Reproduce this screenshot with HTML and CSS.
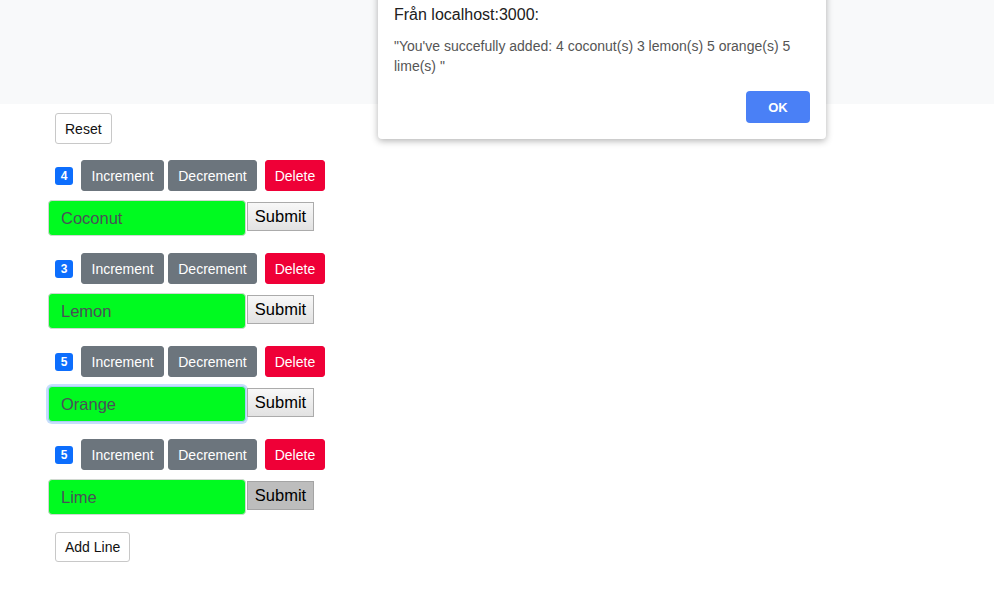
FILE: index.html
```html
<!DOCTYPE html>
<html>
<head>
<meta charset="utf-8">
<link rel="stylesheet" href="styles.css">
</head>
<body>
<div class="topbar"></div>
<div class="page">
  <button class="btn-plain reset">Reset</button>
  <div class="line">
    <div class="controls"><span class="badge">4</span><button class="btn-sm gray inc">Increment</button><button class="btn-sm gray dec">Decrement</button><button class="btn-sm red">Delete</button></div>
    <form class="entry"><input class="field" value="Coconut"><button type="button" class="submit">Submit</button></form>
  </div>
  <div class="line">
    <div class="controls"><span class="badge">3</span><button class="btn-sm gray inc">Increment</button><button class="btn-sm gray dec">Decrement</button><button class="btn-sm red">Delete</button></div>
    <form class="entry"><input class="field" value="Lemon"><button type="button" class="submit">Submit</button></form>
  </div>
  <div class="line">
    <div class="controls"><span class="badge">5</span><button class="btn-sm gray inc">Increment</button><button class="btn-sm gray dec">Decrement</button><button class="btn-sm red">Delete</button></div>
    <form class="entry"><input class="field focused" value="Orange"><button type="button" class="submit">Submit</button></form>
  </div>
  <div class="line">
    <div class="controls"><span class="badge">5</span><button class="btn-sm gray inc">Increment</button><button class="btn-sm gray dec">Decrement</button><button class="btn-sm red">Delete</button></div>
    <form class="entry"><input class="field" value="Lime"><button type="button" class="submit pressed">Submit</button></form>
  </div>
  <button class="btn-plain addline">Add Line</button>
</div>
<div class="dialog">
  <div class="dlg-title">Från localhost:3000:</div>
  <div class="dlg-msg">"You've succefully added: 4 coconut(s) 3 lemon(s) 5 orange(s) 5 lime(s) "</div>
  <div class="dlg-actions"><button class="ok">OK</button></div>
</div>
</body>
</html>
```

FILE: styles.css
```css
* { box-sizing: border-box; }
html, body { margin: 0; padding: 0; }
body {
  font-family: "Liberation Sans", Arial, sans-serif;
  background: #fff;
  color: #212529;
  width: 994px;
  height: 610px;
  overflow: hidden;
}
.topbar {
  height: 104px;
  background: #f8f9fa;
}
.page {
  padding: 9px 0 0 48px;
  display: flex;
  flex-direction: column;
  align-items: flex-start;
}
.btn-plain {
  font-family: inherit;
  font-size: 14px;
  line-height: 21px;
  padding: 4px 9px;
  background: #fff;
  color: #111;
  border: 1px solid #c8c8c8;
  border-radius: 3px;
  margin-left: 7px;
}
.reset { height: 31px; margin-bottom: 16px; padding: 5px 9px 4px; }
.addline { height: 30px; padding: 4px 9px 3px; }
.line {
  display: flex;
  flex-direction: column;
  align-items: flex-start;
  margin-bottom: 17px;
}
.controls {
  display: flex;
  align-items: center;
  margin-left: 7px;
  height: 31px;
}
.badge {
  width: 18px;
  height: 18px;
  border-radius: 3px;
  background: #0d6efd;
  color: #fff;
  font-size: 12px;
  font-weight: bold;
  display: flex;
  align-items: center;
  justify-content: center;
  margin-right: 8px;
}
.btn-sm {
  font-family: inherit;
  font-size: 14px;
  line-height: 21px;
  height: 31px;
  padding: 5px 9px 3px;
  border: 1px solid transparent;
  border-radius: 3px;
  color: #fff;
}
.gray { background: #6c757d; border-color: #6c757d; }
.inc { margin-right: 4px; padding-left: 9.5px; padding-right: 9.5px; }
.dec { margin-right: 8px; }
.red { background: #ef0037; border-color: #ef0037; }
.entry {
  display: flex;
  align-items: flex-start;
  margin: 9px 0 0 0;
}
.field {
  width: 198px;
  height: 36px;
  background: #00fa20;
  border: 1px solid #d0d8d0;
  border-radius: 4px;
  padding: 0 12px;
  font-family: inherit;
  font-size: 16.5px;
  color: #495057;
  outline: none;
}
.field.focused {
  border-color: #a9cdf7;
  box-shadow: 0 0 0 2px rgba(160, 200, 250, 0.6);
}
.submit {
  margin-top: 2px;
  margin-left: 1px;
  width: 67px;
  height: 29px;
  font-family: inherit;
  font-size: 16.5px;
  color: #000;
  padding: 0;
  border: 1px solid #ababab;
  border-radius: 0;
  background: linear-gradient(#f8f8f8, #e2e2e2);
}
.submit.pressed {
  background: #bdbdbd;
  border-color: #a4a4a4;
}
.dialog {
  position: absolute;
  left: 378px;
  top: -10px;
  width: 448px;
  height: 149px;
  background: #fff;
  border-radius: 0 0 4px 4px;
  box-shadow: 0 2px 7px rgba(0, 0, 0, 0.3);
  padding: 16px 16px 16px 16px;
}
.dlg-title {
  font-size: 16px;
  color: #202020;
  line-height: 18px;
}
.dlg-msg {
  margin-top: 12px;
  font-size: 14px;
  line-height: 20px;
  color: #555;
  padding-right: 10px;
}
.dlg-actions {
  display: flex;
  justify-content: flex-end;
  margin-top: 15px;
}
.ok {
  width: 64px;
  height: 32px;
  border: none;
  border-radius: 4px;
  background: #4a80f6;
  color: #fff;
  font-family: inherit;
  font-weight: bold;
  font-size: 13px;
}
```
